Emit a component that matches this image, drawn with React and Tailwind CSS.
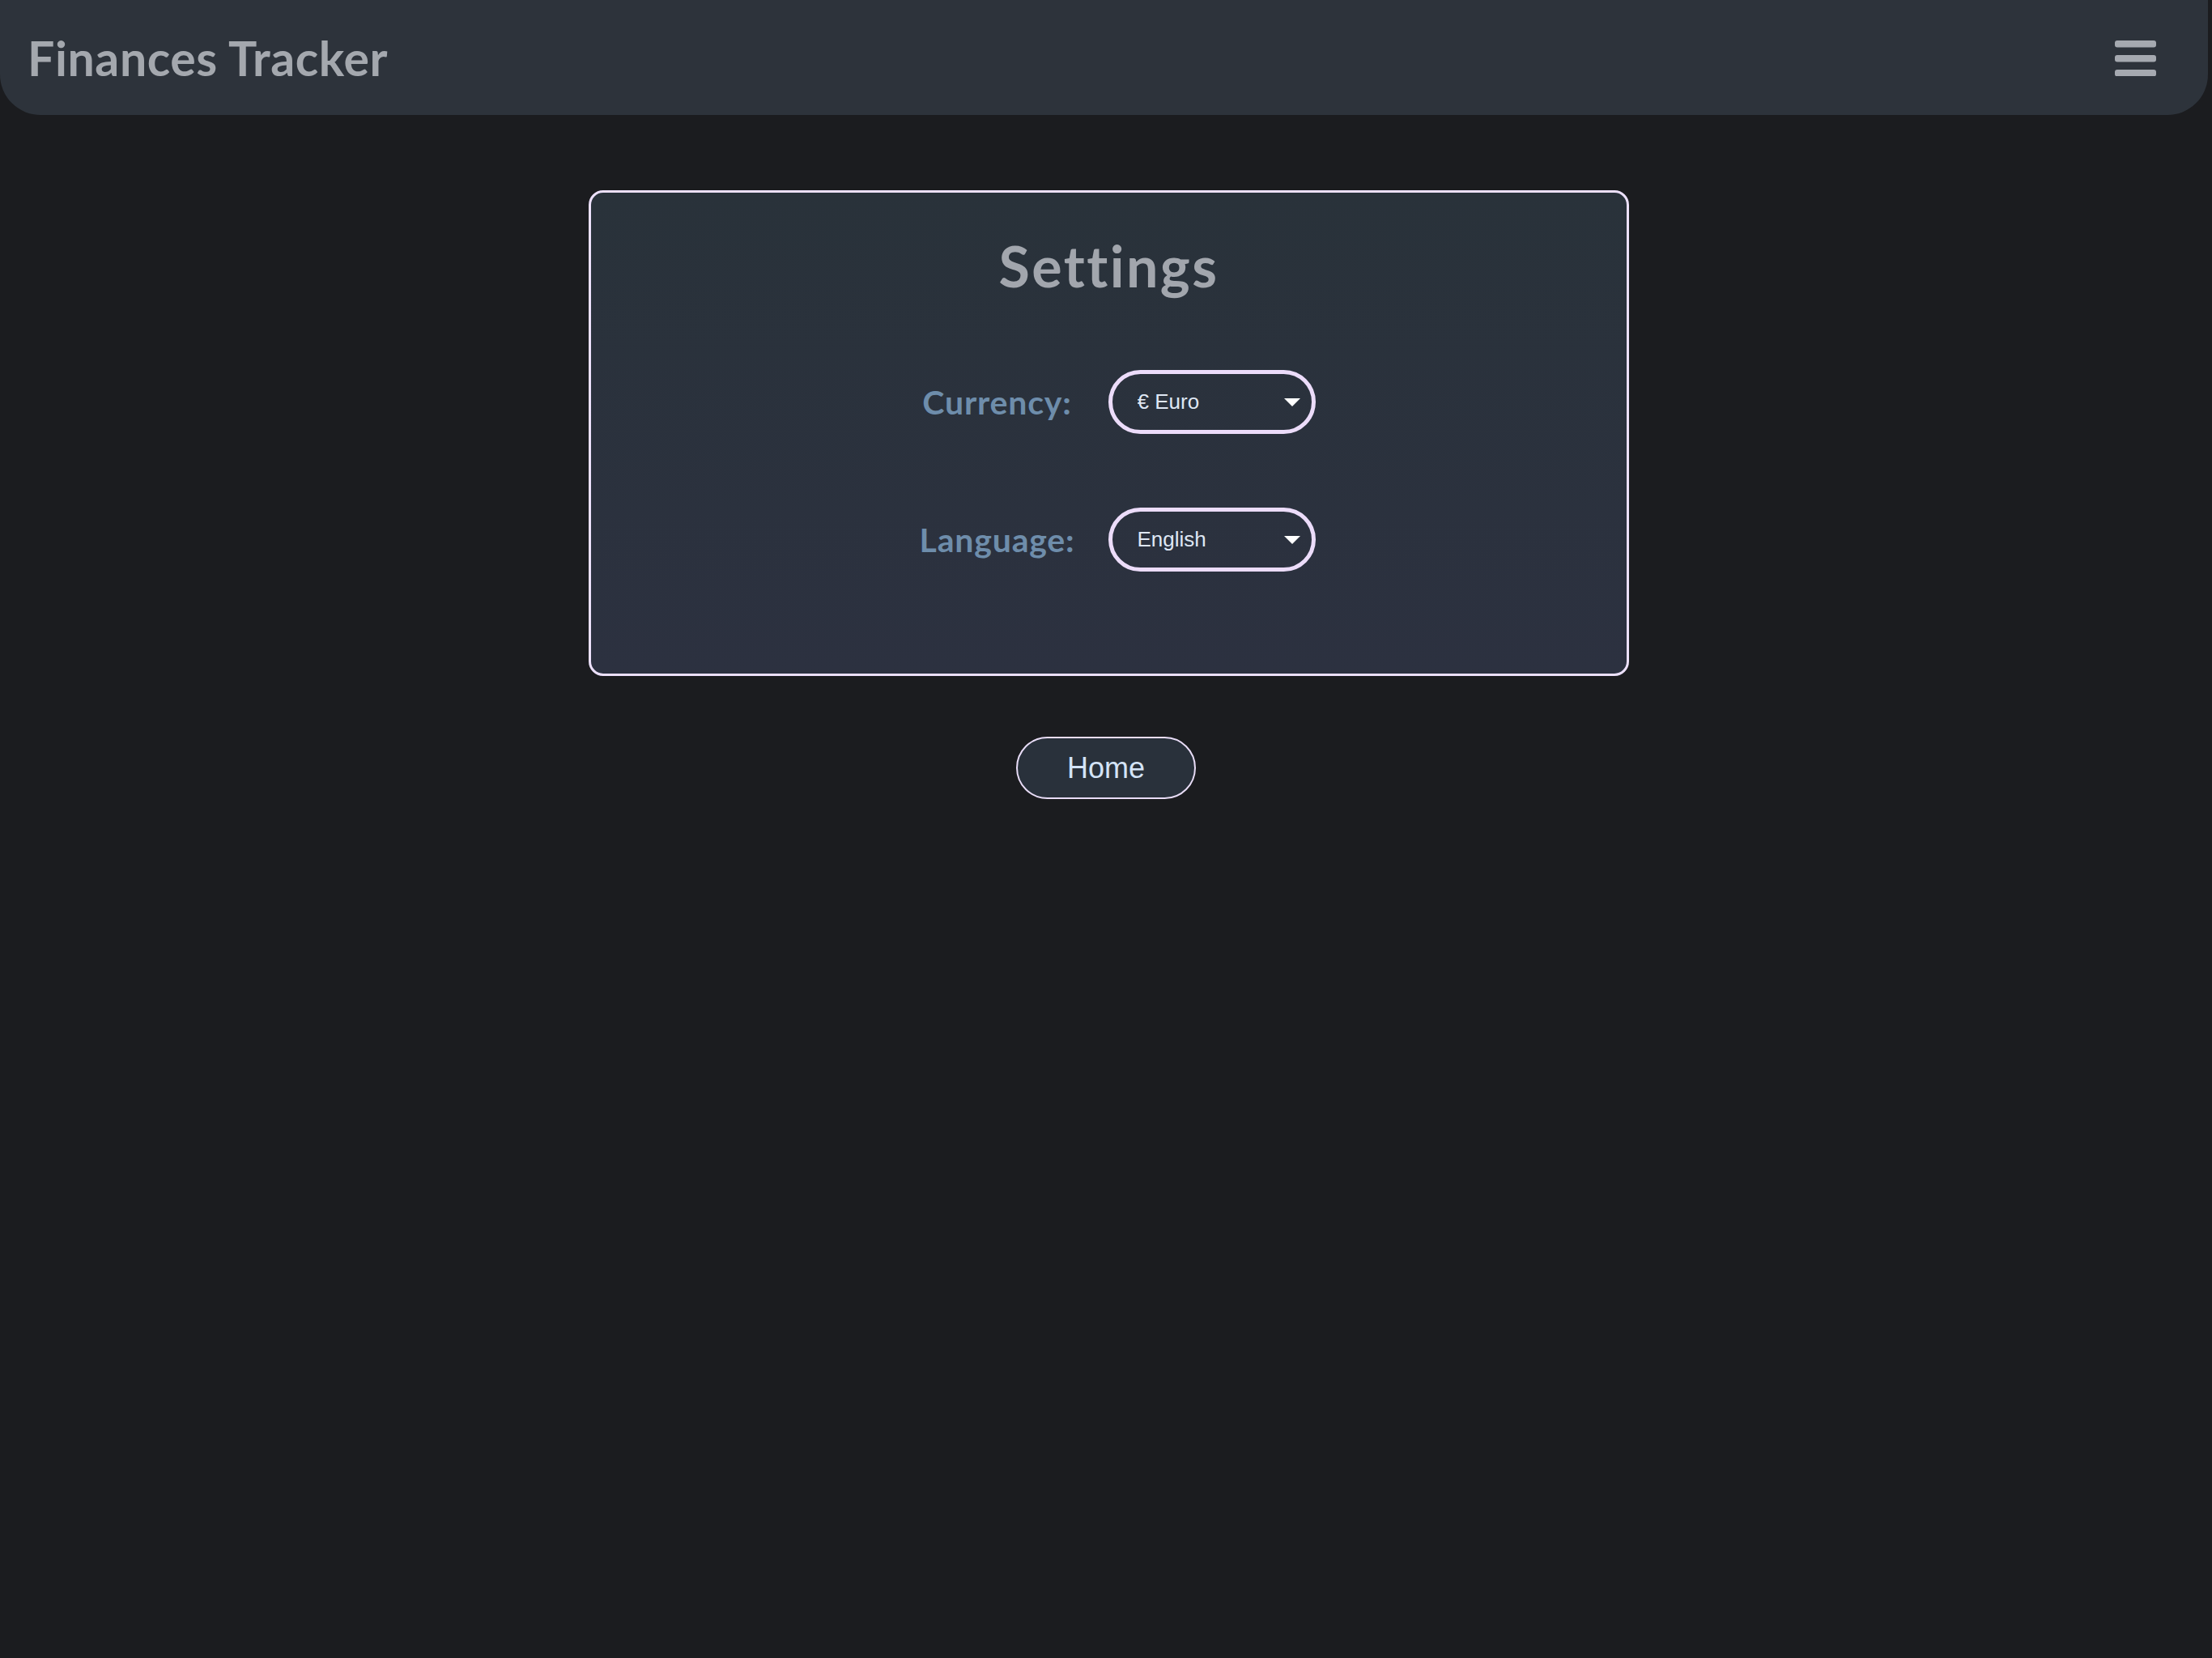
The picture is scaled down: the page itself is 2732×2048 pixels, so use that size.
import React, { useState } from 'react';

const CURRENCIES = [
  { value: 'EUR', label: '€ Euro' },
  { value: 'USD', label: '$ Dollar' },
  { value: 'GBP', label: '£ Pound' },
];

const LANGUAGES = [
  { value: 'en', label: 'English' },
  { value: 'de', label: 'Deutsch' },
  { value: 'fr', label: 'Français' },
];

function MenuIcon() {
  return (
    <svg width="51" height="44" viewBox="0 0 51 44" fill="#a5a9b0">
      <rect x="0" y="0" width="51" height="8.5" rx="3" />
      <rect x="0" y="18" width="51" height="8.5" rx="3" />
      <rect x="0" y="36" width="51" height="8.5" rx="3" />
    </svg>
  );
}

function PillSelect({ value, onChange, options }) {
  return (
    <div className="relative w-[256px] h-[79px]">
      <select
        value={value}
        onChange={(e) => onChange(e.target.value)}
        className="appearance-none w-full h-full rounded-full border-[5px] border-[#ecdcfa] bg-transparent pl-[31px] pr-[50px] text-[26px] text-[#dfe7f4] outline-none"
        style={{ fontFamily: '"Liberation Sans", Arial, sans-serif' }}
      >
        {options.map((o) => (
          <option key={o.value} value={o.value} className="bg-[#2b323b]">
            {o.label}
          </option>
        ))}
      </select>
      <span className="pointer-events-none absolute right-[19px] top-[35px] w-0 h-0 border-l-[10px] border-r-[10px] border-t-[10px] border-l-transparent border-r-transparent border-t-white" />
    </div>
  );
}

export default function App() {
  const [currency, setCurrency] = useState('EUR');
  const [language, setLanguage] = useState('en');

  return (
    <div
      className="min-h-screen bg-[#1b1c1f]"
      style={{ fontFamily: 'Lato, "Open Sans", sans-serif' }}
    >
      {/* Top bar */}
      <header className="mr-[5px] h-[142px] bg-[#2d333b] rounded-b-[50px] flex items-center justify-between pl-[34px] pr-[64px]">
        <h1 className="text-[59px] leading-none font-bold text-[#a4a8ae] tracking-[0.01em]">
          Finances Tracker
        </h1>
        <button className="pt-[2px]">
          <MenuIcon />
        </button>
      </header>

      <main className="flex flex-col items-center pt-[93px]">
        {/* Settings card */}
        <section className="w-[1285px] ml-[7px] rounded-[18px] border-[3px] border-[#ece0fb] bg-linear-to-b from-[#29323a] to-[#2c3140] pt-[55px] pb-[126px] flex flex-col items-center">
          <h2 className="text-[70px] leading-[70px] font-bold text-[#a2a6ad] tracking-[0.035em]">
            Settings
          </h2>

          <div className="mt-[94px] grid grid-cols-[230px_256px] gap-x-[22px] gap-y-[91px] items-center pl-[2px]">
            <label className="text-center text-[41px] font-bold text-[#6e8dab] tracking-[0.02em]">
              Currency:
            </label>
            <PillSelect value={currency} onChange={setCurrency} options={CURRENCIES} />

            <label className="text-center text-[41px] font-bold text-[#6e8dab] tracking-[0.02em]">
              Language:
            </label>
            <PillSelect value={language} onChange={setLanguage} options={LANGUAGES} />
          </div>
        </section>

        <button
          className="mt-[75px] w-[222px] h-[77px] rounded-full border-2 border-[#e8dcf6] bg-[#29313b] text-[36px] text-[#d4e4f7]"
          style={{ fontFamily: '"Liberation Sans", Arial, sans-serif' }}
        >
          Home
        </button>
      </main>
    </div>
  );
}
